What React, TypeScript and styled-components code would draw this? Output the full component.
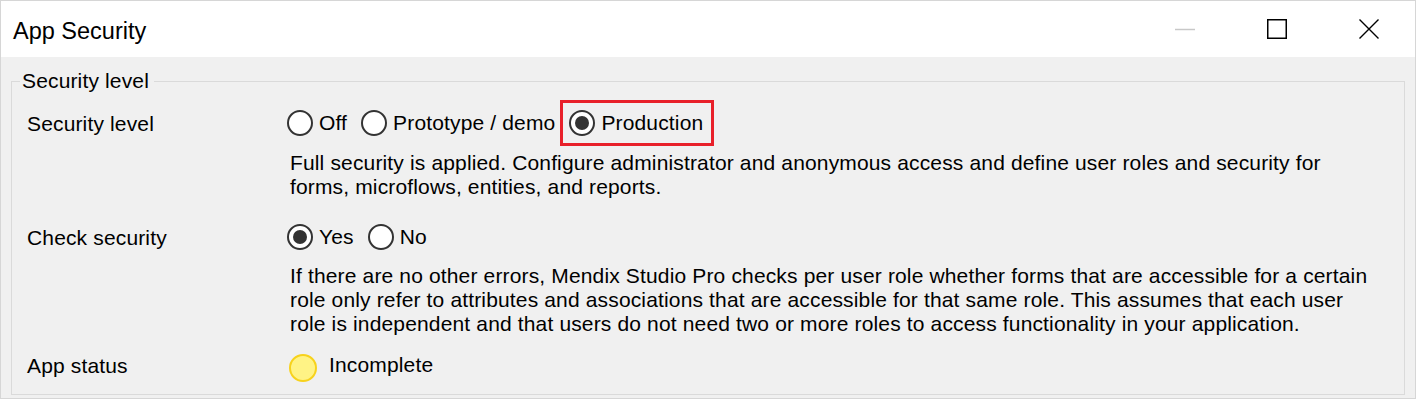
import React from "react";
import styled, { createGlobalStyle } from "styled-components";

const GlobalStyle = createGlobalStyle`
  html, body { margin: 0; padding: 0; background: #ffffff; }
  body { font-family: "Liberation Sans", Arial, sans-serif; color: #000; }
  * { box-sizing: border-box; }
`;

const Window = styled.div`
  width: 1416px;
  height: 399px;
  border: 1px solid #d6d6d6;
  display: flex;
  flex-direction: column;
  background: #f0f0f0;
`;

const TitleBar = styled.div`
  height: 56px;
  flex: none;
  background: #ffffff;
  display: flex;
  align-items: center;
`;

const Title = styled.div`
  flex: 1;
  padding-left: 12px;
  padding-top: 3px;
  font-size: 23.5px;
  line-height: 28px;
`;

const TitleButton = styled.div`
  width: 92px;
  height: 56px;
  display: flex;
  align-items: center;
  justify-content: center;
`;

const Body = styled.div`
  flex: 1;
  padding: 12px 10px 3px 10px;
  display: flex;
`;

const Group = styled.fieldset`
  flex: 1;
  margin: 0;
  padding: 7px 0 0 0;
  border: 1px solid #dadada;
  min-width: 0;
`;

const Legend = styled.legend`
  margin-left: 8px;
  padding: 0 5px 0 2px;
  font-size: 21px;
  letter-spacing: 0.15px;
  line-height: 24px;
`;

const Row = styled.div`
  display: grid;
  grid-template-columns: 260px 1fr;
  padding-left: 15px;
  font-size: 21px;
  letter-spacing: 0.15px;
`;

const Label = styled.div<{ $h: number }>`
  height: ${(p) => p.$h}px;
  display: flex;
  align-items: center;
  padding-top: 2px;
`;

const Content = styled.div`
  display: flex;
  flex-direction: column;
`;

const RadioGroup = styled.div`
  height: 46px;
  display: flex;
  align-items: center;
  gap: 14px;
`;

const RadioOption = styled.label`
  display: flex;
  align-items: center;
  gap: 6px;
  white-space: nowrap;
`;

const Circle = styled.span<{ $checked?: boolean }>`
  width: 26px;
  height: 26px;
  border-radius: 50%;
  border: 2px solid #333333;
  background: #ffffff;
  display: flex;
  align-items: center;
  justify-content: center;
  flex: none;
  &::after {
    content: "";
    display: ${(p) => (p.$checked ? "block" : "none")};
    width: 14px;
    height: 14px;
    border-radius: 50%;
    background: #333333;
  }
`;

const Highlight = styled.div`
  height: 46px;
  margin-left: -9px;
  border: 3px solid #e8202a;
  padding: 0 8px 0 6px;
  display: flex;
  align-items: center;
`;

const Description = styled.p<{ $mt: number; $mb: number }>`
  margin: ${(p) => p.$mt}px 0 ${(p) => p.$mb}px 3px;
  line-height: 24px;
  white-space: nowrap;
`;

const StatusLine = styled.div`
  height: 46px;
  display: flex;
  align-items: center;
  gap: 12px;
  padding-left: 2px;
`;

const StatusDot = styled.span`
  width: 28px;
  height: 28px;
  margin-top: 6px;
  border-radius: 50%;
  background: #fff385;
  border: 2px solid #f7d21c;
  flex: none;
`;

function Radio({ label, checked }: { label: string; checked?: boolean }) {
  return (
    <RadioOption>
      <Circle $checked={checked} />
      <span>{label}</span>
    </RadioOption>
  );
}

export default function App() {
  return (
    <>
      <GlobalStyle />
      <Window>
        <TitleBar>
          <Title>App Security</Title>
          <TitleButton>
            <svg width="20" height="20" viewBox="0 0 20 20">
              <line x1="0" y1="10.5" x2="20" y2="10.5" stroke="#c8c8c8" strokeWidth="1.5" />
            </svg>
          </TitleButton>
          <TitleButton>
            <svg width="20" height="20" viewBox="0 0 20 20">
              <rect x="0.75" y="0.75" width="18.5" height="18.5" fill="none" stroke="#000" strokeWidth="1.5" />
            </svg>
          </TitleButton>
          <TitleButton>
            <svg width="20" height="20" viewBox="0 0 20 20">
              <path d="M0.5 0.5 L19.5 19.5 M19.5 0.5 L0.5 19.5" stroke="#000" strokeWidth="1.4" fill="none" />
            </svg>
          </TitleButton>
        </TitleBar>
        <Body>
          <Group>
            <Legend>Security level</Legend>
            <Row>
              <Label $h={46}>Security level</Label>
              <Content>
                <RadioGroup>
                  <Radio label="Off" />
                  <Radio label="Prototype / demo" />
                  <Highlight>
                    <Radio label="Production" checked />
                  </Highlight>
                </RadioGroup>
                <Description $mt={5} $mb={15}>
                  Full security is applied. Configure administrator and anonymous access and define user roles and security for
                  <br />
                  forms, microflows, entities, and reports.
                </Description>
              </Content>
            </Row>
            <Row>
              <Label $h={46}>Check security</Label>
              <Content>
                <RadioGroup>
                  <Radio label="Yes" checked />
                  <Radio label="No" />
                </RadioGroup>
                <Description $mt={4} $mb={6}>
                  If there are no other errors, Mendix Studio Pro checks per user role whether forms that are accessible for a certain
                  <br />
                  role only refer to attributes and associations that are accessible for that same role. This assumes that each user
                  <br />
                  role is independent and that users do not need two or more roles to access functionality in your application.
                </Description>
              </Content>
            </Row>
            <Row>
              <Label $h={46}>App status</Label>
              <Content>
                <StatusLine>
                  <StatusDot />
                  <span>Incomplete</span>
                </StatusLine>
              </Content>
            </Row>
          </Group>
        </Body>
      </Window>
    </>
  );
}
